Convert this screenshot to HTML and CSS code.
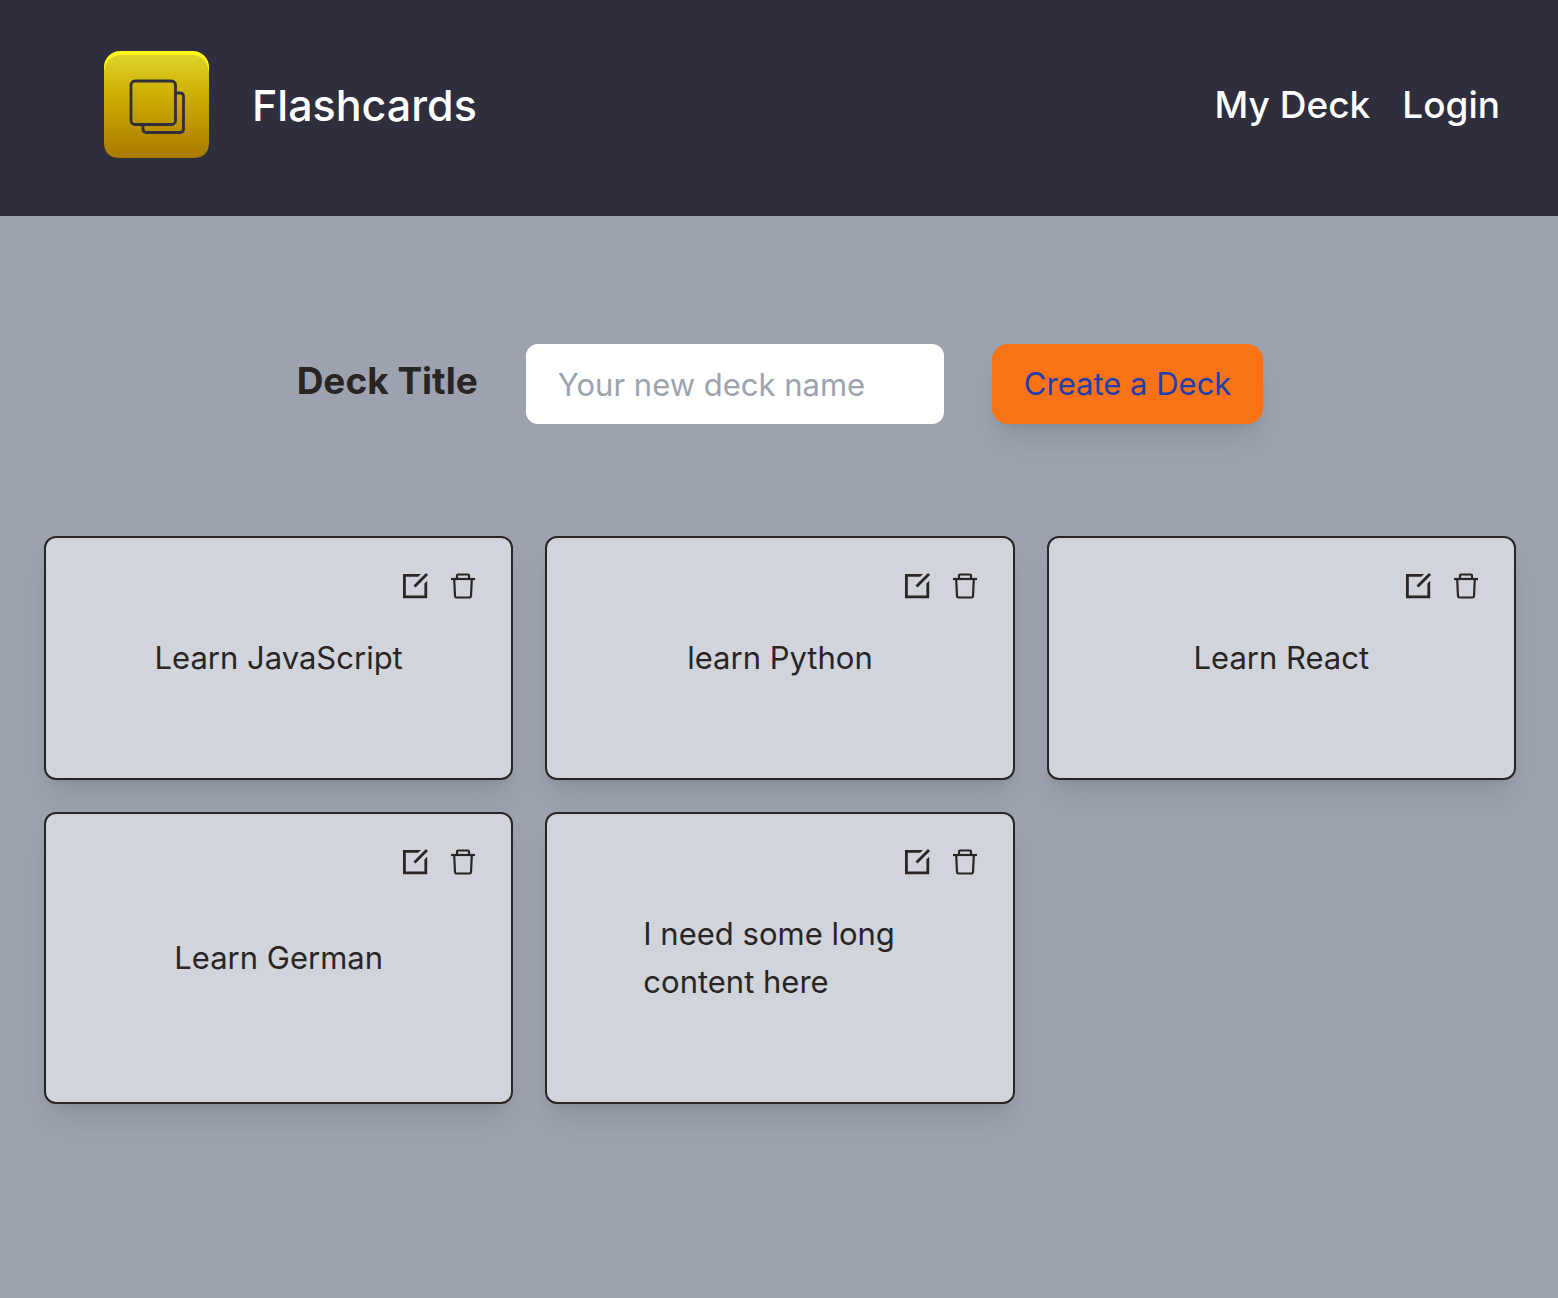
FILE: index.html
```html
<!DOCTYPE html>
<html lang="en">
<head>
  <meta charset="utf-8">
  <meta name="viewport" content="width=device-width, initial-scale=1">
  <title>Flashcards</title>
  <link rel="stylesheet" href="styles.css">
</head>
<body>
  <svg class="sprite" aria-hidden="true">
    <symbol id="icon-edit" viewBox="0 0 32 32">
      <path d="M4 4H22L19.200 6.800H6.800V25.400H25.400V13.500L28.200 10.700V28.200H4Z" fill="currentColor"/>
      <path d="M15.500 16.500L28 4" fill="none" stroke="currentColor" stroke-width="2.800"/>
    </symbol>
    <symbol id="icon-trash" viewBox="0 0 32 32">
      <g fill="none" stroke="currentColor" stroke-width="2.200">
        <path d="M4 9H28"/>
        <path d="M10 8.500V5.500Q10 4.500 11 4.500H21Q22 4.500 22 5.500V8.500"/>
        <path d="M7.200 9.500L8 26Q8.100 27.500 9.500 27.500H22.500Q23.900 27.500 24 26L24.800 9.500"/>
      </g>
    </symbol>
  </svg>

  <header class="header">
    <a class="brand" href="#">
      <svg class="logo" viewBox="0 0 192 192" aria-hidden="true">
        <defs>
          <linearGradient id="gold" x1="0" y1="0" x2="0" y2="1">
            <stop offset="0" stop-color="#dfd32a"/>
            <stop offset="0.400" stop-color="#ccad00"/>
            <stop offset="1" stop-color="#aa7900"/>
          </linearGradient>
        </defs>
        <rect x="44" y="43" width="105" height="60" rx="16" fill="#fff71a"/>
        <path d="M44 63Q47 47 62 47H131Q146 47 149 63V134Q149 150 133 150H60Q44 150 44 134Z" fill="url(#gold)"/>
        <g fill="none" stroke="#2f2e3c" stroke-width="2.800">
          <rect x="71" y="73" width="44.500" height="43.500" rx="4"/>
          <path d="M115.500 85H120Q123.500 85 123.500 88.500V121Q123.500 124.500 120 124.500H86.500Q83 124.500 83 121V116.500"/>
        </g>
      </svg>
      <span class="brand-name">Flashcards</span>
    </a>
    <nav class="nav">
      <a href="#">My Deck</a>
      <a href="#">Login</a>
    </nav>
  </header>

  <main class="main">
    <form class="create">
      <label class="create-label" for="deck-title">Deck Title</label>
      <input class="create-input" id="deck-title" type="text" placeholder="Your new deck name">
      <button class="create-button" type="button">Create a Deck</button>
    </form>

    <ul class="decks">
      <li class="deck">
        <div class="actions">
          <button type="button" aria-label="Edit"><svg><use href="#icon-edit"/></svg></button>
          <button type="button" aria-label="Delete"><svg><use href="#icon-trash"/></svg></button>
        </div>
        <a class="deck-title" href="#">Learn JavaScript</a>
      </li>
      <li class="deck">
        <div class="actions">
          <button type="button" aria-label="Edit"><svg><use href="#icon-edit"/></svg></button>
          <button type="button" aria-label="Delete"><svg><use href="#icon-trash"/></svg></button>
        </div>
        <a class="deck-title" href="#">learn Python</a>
      </li>
      <li class="deck">
        <div class="actions">
          <button type="button" aria-label="Edit"><svg><use href="#icon-edit"/></svg></button>
          <button type="button" aria-label="Delete"><svg><use href="#icon-trash"/></svg></button>
        </div>
        <a class="deck-title" href="#">Learn React</a>
      </li>
      <li class="deck">
        <div class="actions">
          <button type="button" aria-label="Edit"><svg><use href="#icon-edit"/></svg></button>
          <button type="button" aria-label="Delete"><svg><use href="#icon-trash"/></svg></button>
        </div>
        <a class="deck-title" href="#">Learn German</a>
      </li>
      <li class="deck">
        <div class="actions">
          <button type="button" aria-label="Edit"><svg><use href="#icon-edit"/></svg></button>
          <button type="button" aria-label="Delete"><svg><use href="#icon-trash"/></svg></button>
        </div>
        <a class="deck-title" href="#">I need some long content here</a>
      </li>
    </ul>
  </main>
</body>
</html>
```
FILE: styles.css
```css
* {
  box-sizing: border-box;
}

body {
  margin: 0;
  min-height: 100vh;
  background: #9ca3af;
  color: #292524;
  font-family: Inter, "Liberation Sans", sans-serif;
  font-size: 31px;
  line-height: 48px;
}

a {
  color: inherit;
  text-decoration: none;
}

button,
input {
  border: 0;
  font: inherit;
}

button {
  cursor: pointer;
}

.sprite {
  display: none;
}

.header {
  display: flex;
  align-items: center;
  justify-content: space-between;
  padding: 8px 58px 16px 60px;
  background: #2f2e3c;
  color: #fff;
}

.brand {
  display: flex;
  align-items: center;
}

.logo {
  width: 192px;
  height: 192px;
}

.brand-name,
.nav {
  padding-top: 2px;
  font-weight: 500;
}

.brand-name {
  font-size: 43px;
}

.nav {
  display: flex;
  gap: 32px;
  font-size: 37px;
}

.main {
  padding: 128px 42px 128px 44px;
}

.create {
  display: flex;
  align-items: center;
  justify-content: center;
  gap: 48px;
  margin-bottom: 112px;
}

.create-label {
  padding-bottom: 6px;
  font-size: 37px;
  font-weight: 700;
}

.create-input {
  width: 418px;
  height: 80px;
  padding: 0 32px;
  border-radius: 12px;
  background: #fff;
  color: inherit;
}

.create-input::placeholder {
  color: #9ca3af;
  opacity: 1;
}

.create-button {
  padding: 16px 32px;
  border-radius: 16px;
  background: #f97316;
  color: #1e40af;
  box-shadow: 0 20px 30px -6px rgb(0 0 0 / 10%), 0 8px 12px -8px rgb(0 0 0 / 10%);
}

.decks {
  display: grid;
  grid-template-columns: repeat(3, 1fr);
  gap: 32px;
  margin: 0;
  padding: 0;
  list-style: none;
}

.deck {
  display: flex;
  flex-direction: column;
  padding: 32px;
  border: 2px solid #292524;
  border-radius: 12px;
  background: #d1d5db;
  box-shadow: 0 20px 30px -6px rgb(0 0 0 / 10%), 0 8px 12px -8px rgb(0 0 0 / 10%);
}

.actions {
  display: flex;
  justify-content: flex-end;
  gap: 16px;
}

.actions button {
  width: 32px;
  height: 32px;
  padding: 0;
  background: none;
  color: inherit;
}

.actions svg {
  display: block;
  width: 32px;
  height: 32px;
}

.deck-title {
  display: flex;
  flex: 1;
  align-items: center;
  justify-content: center;
  padding: 32px 64px 64px;
}
```
